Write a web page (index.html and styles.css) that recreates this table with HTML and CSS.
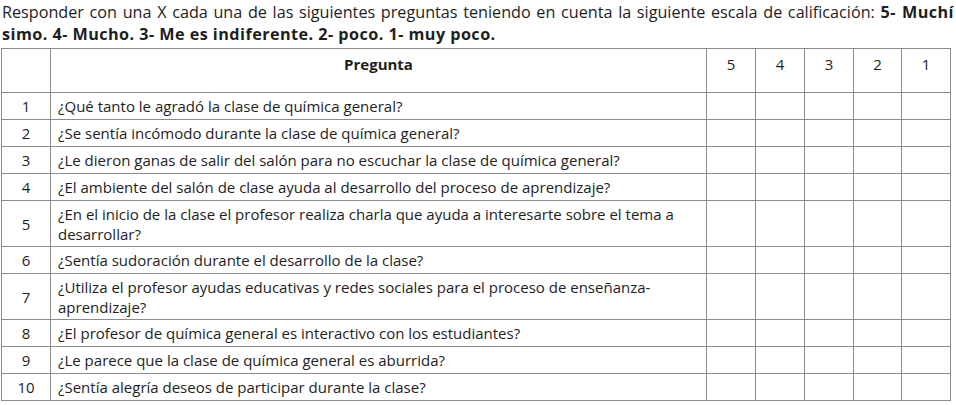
FILE: index.html
```html
<!DOCTYPE html>
<html lang="es">
<head>
<meta charset="utf-8">
<link rel="stylesheet" href="styles.css">
</head>
<body>
<div class="intro"><span class="intro-line">Responder con una X cada una de las siguientes preguntas teniendo en cuenta la siguiente escala de calificación: <b>5- Muchí</b></span><span class="intro-line last"><b>simo. 4- Mucho. 3- Me es indiferente. 2- poco. 1- muy poco.</b></span></div>
<table class="survey">
  <colgroup>
    <col class="c-num"><col class="c-q"><col class="c-s"><col class="c-s"><col class="c-s"><col class="c-s2"><col class="c-s">
  </colgroup>
  <thead>
    <tr class="head"><th></th><th>Pregunta</th><th>5</th><th>4</th><th>3</th><th>2</th><th>1</th></tr>
  </thead>
  <tbody>
    <tr><td class="n">1</td><td class="q">¿Qué tanto le agradó la clase de química general?</td><td></td><td></td><td></td><td></td><td></td></tr>
    <tr><td class="n">2</td><td class="q">¿Se sentía incómodo durante la clase de química general?</td><td></td><td></td><td></td><td></td><td></td></tr>
    <tr><td class="n">3</td><td class="q">¿Le dieron ganas de salir del salón para no escuchar la clase de química general?</td><td></td><td></td><td></td><td></td><td></td></tr>
    <tr><td class="n">4</td><td class="q">¿El ambiente del salón de clase ayuda al desarrollo del proceso de aprendizaje?</td><td></td><td></td><td></td><td></td><td></td></tr>
    <tr class="tall"><td class="n">5</td><td class="q">¿En el inicio de la clase el profesor realiza charla que ayuda a interesarte sobre el tema a<br>desarrollar?</td><td></td><td></td><td></td><td></td><td></td></tr>
    <tr><td class="n">6</td><td class="q">¿Sentía sudoración durante el desarrollo de la clase?</td><td></td><td></td><td></td><td></td><td></td></tr>
    <tr class="tall"><td class="n">7</td><td class="q">¿Utiliza el profesor ayudas educativas y redes sociales para el proceso de enseñanza-<br>aprendizaje?</td><td></td><td></td><td></td><td></td><td></td></tr>
    <tr><td class="n">8</td><td class="q">¿El profesor de química general es interactivo con los estudiantes?</td><td></td><td></td><td></td><td></td><td></td></tr>
    <tr><td class="n">9</td><td class="q">¿Le parece que la clase de química general es aburrida?</td><td></td><td></td><td></td><td></td><td></td></tr>
    <tr><td class="n">10</td><td class="q">¿Sentía alegría deseos de participar durante la clase?</td><td></td><td></td><td></td><td></td><td></td></tr>
  </tbody>
</table>
</body>
</html>
```

FILE: styles.css
```css
html, body {
  margin: 0;
  padding: 0;
  background: #ffffff;
}
body {
  font-family: "Open Sans", "Noto Sans", sans-serif;
  color: #1e1e1e;
}
.intro {
  box-sizing: border-box;
  width: 956px;
  height: 48px;
  padding: 1px 2px 0 2px;
  font-size: 16.2px;
  line-height: 22px;
  overflow: hidden;
}
.intro-line {
  display: block;
  white-space: nowrap;
  text-align: justify;
  text-align-last: justify;
}
.intro-line.last {
  text-align: left;
  text-align-last: left;
}
.intro b {
  font-weight: 700;
  letter-spacing: 0.45px;
}
.survey {
  margin-left: 1px;
  border-collapse: collapse;
  table-layout: fixed;
  width: 950px;
  font-size: 15px;
}
.c-num { width: 49px; }
.c-q { width: 656px; }
.c-s { width: 49px; }
.c-s2 { width: 48px; }
.survey th, .survey td {
  border: 1px solid #8c8c8c;
  padding: 0;
}
.survey tr { height: 27px; }
.survey tr.head { height: 44px; }
.survey tr.tall { height: 46px; }
.survey th {
  vertical-align: top;
  padding-top: 5px;
  font-weight: 400;
  line-height: 20px;
}
.survey th:nth-child(2) {
  font-weight: 700;
}
.survey td {
  vertical-align: middle;
  line-height: 20px;
}
.survey td.n {
  text-align: center;
}
.survey td.q {
  padding-left: 7px;
}
```
